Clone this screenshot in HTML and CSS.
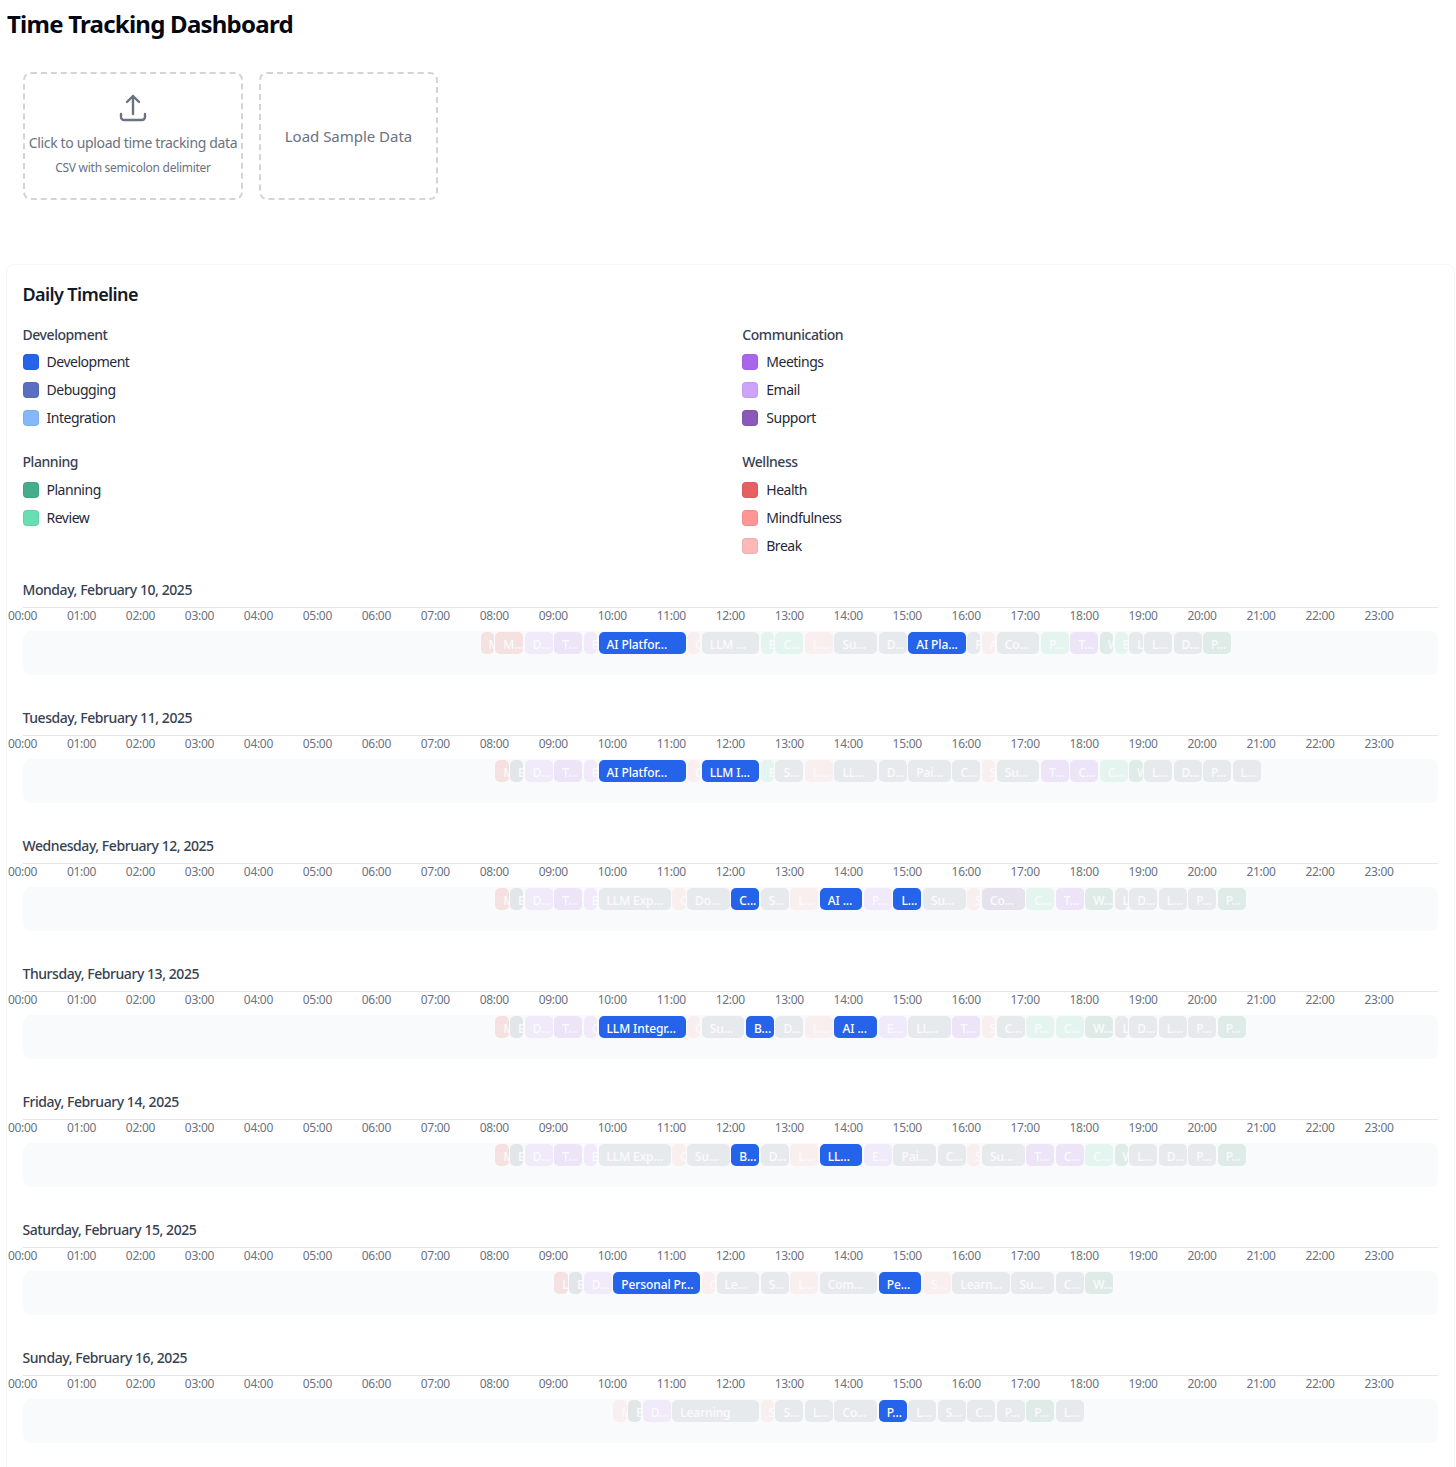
FILE: index.html
```html
<!DOCTYPE html>
<html lang="en">
<head>
<meta charset="utf-8">
<title>Time Tracking Dashboard</title>
<link rel="stylesheet" href="styles.css">
</head>
<body>
<main class="page">
<h1 class="title">Time Tracking Dashboard</h1>
<section class="actions">
<button class="drop drop-upload" type="button">
<svg class="drop-icon" viewBox="0 0 24 24" fill="none" stroke="currentColor" stroke-width="1.8" stroke-linecap="round" stroke-linejoin="round"><path d="M3 16.5v2.25A2.25 2.25 0 0 0 5.25 21h13.5A2.25 2.25 0 0 0 21 18.75V16.5m-13.5-9L12 3m0 0 4.5 4.5M12 3v13.5"/></svg>
<span class="drop-text">Click to upload time tracking data</span>
<span class="drop-hint">CSV with semicolon delimiter</span>
</button>
<button class="drop drop-sample" type="button">Load Sample Data</button>
</section>
<section class="card">
<h2 class="card-title">Daily Timeline</h2>
<div class="legend">
<div class="legend-group"><h3 class="legend-head">Development</h3>
<div class="legend-item"><i class="swatch sw-dev"></i>Development</div>
<div class="legend-item"><i class="swatch sw-debug"></i>Debugging</div>
<div class="legend-item"><i class="swatch sw-integ"></i>Integration</div></div>
<div class="legend-group"><h3 class="legend-head">Communication</h3>
<div class="legend-item"><i class="swatch sw-meet"></i>Meetings</div>
<div class="legend-item"><i class="swatch sw-email"></i>Email</div>
<div class="legend-item"><i class="swatch sw-support"></i>Support</div></div>
<div class="legend-group"><h3 class="legend-head">Planning</h3>
<div class="legend-item"><i class="swatch sw-plan"></i>Planning</div>
<div class="legend-item"><i class="swatch sw-review"></i>Review</div></div>
<div class="legend-group"><h3 class="legend-head">Wellness</h3>
<div class="legend-item"><i class="swatch sw-health"></i>Health</div>
<div class="legend-item"><i class="swatch sw-mind"></i>Mindfulness</div>
<div class="legend-item"><i class="swatch sw-break"></i>Break</div></div>
</div>

<article class="day">
<h3 class="day-head">Monday, February 10, 2025</h3>
<div class="hours"><span>00:00</span><span>01:00</span><span>02:00</span><span>03:00</span><span>04:00</span><span>05:00</span><span>06:00</span><span>07:00</span><span>08:00</span><span>09:00</span><span>10:00</span><span>11:00</span><span>12:00</span><span>13:00</span><span>14:00</span><span>15:00</span><span>16:00</span><span>17:00</span><span>18:00</span><span>19:00</span><span>20:00</span><span>21:00</span><span>22:00</span><span>23:00</span></div>
<div class="track">
<div class="ev red" style="grid-column:32/span 1">M</div>
<div class="ev rose" style="grid-column:33/span 2">M...</div>
<div class="ev lilac" style="grid-column:35/span 2">D...</div>
<div class="ev purple" style="grid-column:37/span 2">T...</div>
<div class="ev lilac" style="grid-column:39/span 1">E</div>
<div class="ev blue" style="grid-column:40/span 6">AI Platfor...</div>
<div class="ev pale" style="grid-column:46/span 1">C</div>
<div class="ev gray" style="grid-column:47/span 4">LLM ...</div>
<div class="ev mint" style="grid-column:51/span 1">B</div>
<div class="ev mint" style="grid-column:52/span 2">C...</div>
<div class="ev pale" style="grid-column:54/span 2">L...</div>
<div class="ev gray" style="grid-column:56/span 3">Su...</div>
<div class="ev gray" style="grid-column:59/span 2">D...</div>
<div class="ev blue" style="grid-column:61/span 4">AI Pla...</div>
<div class="ev gray" style="grid-column:65/span 1">P</div>
<div class="ev pale" style="grid-column:66/span 1">A</div>
<div class="ev gray" style="grid-column:67/span 3">Co...</div>
<div class="ev mint" style="grid-column:70/span 2">P...</div>
<div class="ev purple" style="grid-column:72/span 2">T...</div>
<div class="ev teal" style="grid-column:74/span 1">W</div>
<div class="ev mint" style="grid-column:75/span 1">B</div>
<div class="ev gray" style="grid-column:76/span 1">L</div>
<div class="ev gray" style="grid-column:77/span 2">L...</div>
<div class="ev gray" style="grid-column:79/span 2">D...</div>
<div class="ev teal" style="grid-column:81/span 2">P...</div>
</div>
</article>

<article class="day">
<h3 class="day-head">Tuesday, February 11, 2025</h3>
<div class="hours"><span>00:00</span><span>01:00</span><span>02:00</span><span>03:00</span><span>04:00</span><span>05:00</span><span>06:00</span><span>07:00</span><span>08:00</span><span>09:00</span><span>10:00</span><span>11:00</span><span>12:00</span><span>13:00</span><span>14:00</span><span>15:00</span><span>16:00</span><span>17:00</span><span>18:00</span><span>19:00</span><span>20:00</span><span>21:00</span><span>22:00</span><span>23:00</span></div>
<div class="track">
<div class="ev red" style="grid-column:33/span 1">M</div>
<div class="ev slate" style="grid-column:34/span 1">B</div>
<div class="ev lilac" style="grid-column:35/span 2">D...</div>
<div class="ev purple" style="grid-column:37/span 2">T...</div>
<div class="ev lilac" style="grid-column:39/span 1">E</div>
<div class="ev blue" style="grid-column:40/span 6">AI Platfor...</div>
<div class="ev pale" style="grid-column:46/span 1">C</div>
<div class="ev blue" style="grid-column:47/span 4">LLM I...</div>
<div class="ev mint" style="grid-column:51/span 1">B</div>
<div class="ev gray" style="grid-column:52/span 2">S...</div>
<div class="ev pale" style="grid-column:54/span 2">L...</div>
<div class="ev gray" style="grid-column:56/span 3">LL...</div>
<div class="ev gray" style="grid-column:59/span 2">D...</div>
<div class="ev gray" style="grid-column:61/span 3">Pai...</div>
<div class="ev gray" style="grid-column:64/span 2">C...</div>
<div class="ev pale" style="grid-column:66/span 1">S</div>
<div class="ev gray" style="grid-column:67/span 3">Su...</div>
<div class="ev purple" style="grid-column:70/span 2">T...</div>
<div class="ev purple" style="grid-column:72/span 2">C...</div>
<div class="ev mint" style="grid-column:74/span 2">C...</div>
<div class="ev teal" style="grid-column:76/span 1">W</div>
<div class="ev gray" style="grid-column:77/span 2">L...</div>
<div class="ev gray" style="grid-column:79/span 2">D...</div>
<div class="ev gray" style="grid-column:81/span 2">P...</div>
<div class="ev gray" style="grid-column:83/span 2">L...</div>
</div>
</article>

<article class="day">
<h3 class="day-head">Wednesday, February 12, 2025</h3>
<div class="hours"><span>00:00</span><span>01:00</span><span>02:00</span><span>03:00</span><span>04:00</span><span>05:00</span><span>06:00</span><span>07:00</span><span>08:00</span><span>09:00</span><span>10:00</span><span>11:00</span><span>12:00</span><span>13:00</span><span>14:00</span><span>15:00</span><span>16:00</span><span>17:00</span><span>18:00</span><span>19:00</span><span>20:00</span><span>21:00</span><span>22:00</span><span>23:00</span></div>
<div class="track">
<div class="ev red" style="grid-column:33/span 1">M</div>
<div class="ev slate" style="grid-column:34/span 1">B</div>
<div class="ev lilac" style="grid-column:35/span 2">D...</div>
<div class="ev purple" style="grid-column:37/span 2">T...</div>
<div class="ev lilac" style="grid-column:39/span 1">E</div>
<div class="ev gray" style="grid-column:40/span 5">LLM Exp...</div>
<div class="ev pale" style="grid-column:45/span 1">C</div>
<div class="ev gray" style="grid-column:46/span 3">Do...</div>
<div class="ev blue" style="grid-column:49/span 2">C...</div>
<div class="ev gray" style="grid-column:51/span 2">S...</div>
<div class="ev pale" style="grid-column:53/span 2">L...</div>
<div class="ev blue" style="grid-column:55/span 3">AI ...</div>
<div class="ev lilac" style="grid-column:58/span 2">P...</div>
<div class="ev blue" style="grid-column:60/span 2">L...</div>
<div class="ev gray" style="grid-column:62/span 3">Su...</div>
<div class="ev pale" style="grid-column:65/span 1">S</div>
<div class="ev plum" style="grid-column:66/span 3">Co...</div>
<div class="ev mint" style="grid-column:69/span 2">C...</div>
<div class="ev purple" style="grid-column:71/span 2">T...</div>
<div class="ev teal" style="grid-column:73/span 2">W...</div>
<div class="ev gray" style="grid-column:75/span 1">L</div>
<div class="ev gray" style="grid-column:76/span 2">D...</div>
<div class="ev gray" style="grid-column:78/span 2">L...</div>
<div class="ev gray" style="grid-column:80/span 2">P...</div>
<div class="ev teal" style="grid-column:82/span 2">P...</div>
</div>
</article>

<article class="day">
<h3 class="day-head">Thursday, February 13, 2025</h3>
<div class="hours"><span>00:00</span><span>01:00</span><span>02:00</span><span>03:00</span><span>04:00</span><span>05:00</span><span>06:00</span><span>07:00</span><span>08:00</span><span>09:00</span><span>10:00</span><span>11:00</span><span>12:00</span><span>13:00</span><span>14:00</span><span>15:00</span><span>16:00</span><span>17:00</span><span>18:00</span><span>19:00</span><span>20:00</span><span>21:00</span><span>22:00</span><span>23:00</span></div>
<div class="track">
<div class="ev red" style="grid-column:33/span 1">M</div>
<div class="ev slate" style="grid-column:34/span 1">B</div>
<div class="ev lilac" style="grid-column:35/span 2">D...</div>
<div class="ev purple" style="grid-column:37/span 2">T...</div>
<div class="ev lilac" style="grid-column:39/span 1">C</div>
<div class="ev blue" style="grid-column:40/span 6">LLM Integr...</div>
<div class="ev pale" style="grid-column:46/span 1">C</div>
<div class="ev gray" style="grid-column:47/span 3">Su...</div>
<div class="ev blue" style="grid-column:50/span 2">B...</div>
<div class="ev gray" style="grid-column:52/span 2">D...</div>
<div class="ev pale" style="grid-column:54/span 2">L...</div>
<div class="ev blue" style="grid-column:56/span 3">AI ...</div>
<div class="ev lilac" style="grid-column:59/span 2">E...</div>
<div class="ev gray" style="grid-column:61/span 3">LL...</div>
<div class="ev purple" style="grid-column:64/span 2">T...</div>
<div class="ev pale" style="grid-column:66/span 1">S</div>
<div class="ev gray" style="grid-column:67/span 2">C...</div>
<div class="ev mint" style="grid-column:69/span 2">P...</div>
<div class="ev mint" style="grid-column:71/span 2">C...</div>
<div class="ev teal" style="grid-column:73/span 2">W...</div>
<div class="ev gray" style="grid-column:75/span 1">L</div>
<div class="ev gray" style="grid-column:76/span 2">D...</div>
<div class="ev gray" style="grid-column:78/span 2">L...</div>
<div class="ev gray" style="grid-column:80/span 2">P...</div>
<div class="ev teal" style="grid-column:82/span 2">P...</div>
</div>
</article>

<article class="day">
<h3 class="day-head">Friday, February 14, 2025</h3>
<div class="hours"><span>00:00</span><span>01:00</span><span>02:00</span><span>03:00</span><span>04:00</span><span>05:00</span><span>06:00</span><span>07:00</span><span>08:00</span><span>09:00</span><span>10:00</span><span>11:00</span><span>12:00</span><span>13:00</span><span>14:00</span><span>15:00</span><span>16:00</span><span>17:00</span><span>18:00</span><span>19:00</span><span>20:00</span><span>21:00</span><span>22:00</span><span>23:00</span></div>
<div class="track">
<div class="ev red" style="grid-column:33/span 1">M</div>
<div class="ev slate" style="grid-column:34/span 1">B</div>
<div class="ev lilac" style="grid-column:35/span 2">D...</div>
<div class="ev purple" style="grid-column:37/span 2">T...</div>
<div class="ev lilac" style="grid-column:39/span 1">E</div>
<div class="ev gray" style="grid-column:40/span 5">LLM Exp...</div>
<div class="ev pale" style="grid-column:45/span 1">C</div>
<div class="ev gray" style="grid-column:46/span 3">Su...</div>
<div class="ev blue" style="grid-column:49/span 2">B...</div>
<div class="ev gray" style="grid-column:51/span 2">D...</div>
<div class="ev pale" style="grid-column:53/span 2">L...</div>
<div class="ev blue" style="grid-column:55/span 3">LL...</div>
<div class="ev lilac" style="grid-column:58/span 2">E...</div>
<div class="ev gray" style="grid-column:60/span 3">Pai...</div>
<div class="ev gray" style="grid-column:63/span 2">C...</div>
<div class="ev pale" style="grid-column:65/span 1">S</div>
<div class="ev gray" style="grid-column:66/span 3">Su...</div>
<div class="ev purple" style="grid-column:69/span 2">T...</div>
<div class="ev purple" style="grid-column:71/span 2">C...</div>
<div class="ev mint" style="grid-column:73/span 2">C...</div>
<div class="ev teal" style="grid-column:75/span 1">W</div>
<div class="ev gray" style="grid-column:76/span 2">L...</div>
<div class="ev gray" style="grid-column:78/span 2">D...</div>
<div class="ev gray" style="grid-column:80/span 2">P...</div>
<div class="ev teal" style="grid-column:82/span 2">P...</div>
</div>
</article>

<article class="day">
<h3 class="day-head">Saturday, February 15, 2025</h3>
<div class="hours"><span>00:00</span><span>01:00</span><span>02:00</span><span>03:00</span><span>04:00</span><span>05:00</span><span>06:00</span><span>07:00</span><span>08:00</span><span>09:00</span><span>10:00</span><span>11:00</span><span>12:00</span><span>13:00</span><span>14:00</span><span>15:00</span><span>16:00</span><span>17:00</span><span>18:00</span><span>19:00</span><span>20:00</span><span>21:00</span><span>22:00</span><span>23:00</span></div>
<div class="track">
<div class="ev red" style="grid-column:37/span 1">L</div>
<div class="ev slate" style="grid-column:38/span 1">B</div>
<div class="ev lilac" style="grid-column:39/span 2">D...</div>
<div class="ev blue" style="grid-column:41/span 6">Personal Pr...</div>
<div class="ev pale" style="grid-column:47/span 1">C</div>
<div class="ev gray" style="grid-column:48/span 3">Le...</div>
<div class="ev gray" style="grid-column:51/span 2">S...</div>
<div class="ev pale" style="grid-column:53/span 2">L...</div>
<div class="ev gray" style="grid-column:55/span 4">Com...</div>
<div class="ev blue" style="grid-column:59/span 3">Pe...</div>
<div class="ev pale" style="grid-column:62/span 2">S...</div>
<div class="ev gray" style="grid-column:64/span 4">Learn...</div>
<div class="ev gray" style="grid-column:68/span 3">Su...</div>
<div class="ev gray" style="grid-column:71/span 2">C...</div>
<div class="ev teal" style="grid-column:73/span 2">W...</div>
</div>
</article>

<article class="day">
<h3 class="day-head">Sunday, February 16, 2025</h3>
<div class="hours"><span>00:00</span><span>01:00</span><span>02:00</span><span>03:00</span><span>04:00</span><span>05:00</span><span>06:00</span><span>07:00</span><span>08:00</span><span>09:00</span><span>10:00</span><span>11:00</span><span>12:00</span><span>13:00</span><span>14:00</span><span>15:00</span><span>16:00</span><span>17:00</span><span>18:00</span><span>19:00</span><span>20:00</span><span>21:00</span><span>22:00</span><span>23:00</span></div>
<div class="track">
<div class="ev pale" style="grid-column:41/span 1">M</div>
<div class="ev slate" style="grid-column:42/span 1">B</div>
<div class="ev lilac" style="grid-column:43/span 2">D...</div>
<div class="ev gray" style="grid-column:45/span 6">Learning</div>
<div class="ev pale" style="grid-column:51/span 1">S</div>
<div class="ev gray" style="grid-column:52/span 2">S...</div>
<div class="ev gray" style="grid-column:54/span 2">L...</div>
<div class="ev gray" style="grid-column:56/span 3">Co...</div>
<div class="ev blue" style="grid-column:59/span 2">P...</div>
<div class="ev gray" style="grid-column:61/span 2">L...</div>
<div class="ev gray" style="grid-column:63/span 2">S...</div>
<div class="ev gray" style="grid-column:65/span 2">C...</div>
<div class="ev gray" style="grid-column:67/span 2">P...</div>
<div class="ev teal" style="grid-column:69/span 2">P...</div>
<div class="ev gray" style="grid-column:71/span 2">L...</div>
</div>
</article>
</section>
</main>
</body>
</html>
```
FILE: styles.css
```css
* { box-sizing: border-box; }
html, body { margin: 0; padding: 0; background: #fff; }
body {
  font-family: "Noto Sans", "Open Sans", "Liberation Sans", sans-serif;
  color: #111827;
  overflow-x: hidden;
}
.page { padding: 0 1px 0 5.5px; }
.title {
  margin: 0;
  padding: 8px 0 0 1.5px;
  height: 72px;
  font-size: 24px;
  line-height: 32px;
  font-weight: 700;
  letter-spacing: -0.76px;
  color: #030712;
}
.actions {
  display: flex;
  gap: 16px;
  padding-left: 17.5px;
  height: 192px;
}
.drop {
  height: 128px;
  border: 2px dashed #d1d5db;
  border-radius: 8px;
  background: #fff;
  color: #6b7280;
  font-family: inherit;
  padding: 0;
  display: flex;
  flex-direction: column;
  align-items: center;
  justify-content: flex-start;
}
.drop-upload { width: 220px; padding-top: 18px; }
.drop-sample { width: 179px; justify-content: center; font-size: 15px; letter-spacing: -0.02px; }
.drop-icon { width: 32px; height: 32px; color: #6b7280; display: block; }
.drop-text { font-size: 14px; line-height: 20px; margin-top: 9px; letter-spacing: -0.35px; white-space: nowrap; }
.drop-hint { font-size: 12px; line-height: 16px; margin-top: 7px; letter-spacing: -0.28px; white-space: nowrap; }
.card {
  border: 1px solid #f5f6f7;
  border-radius: 8px;
  box-shadow: 0 1px 2px rgba(0, 0, 0, 0.02);
  padding: 15px 16px 0;
  background: #fff;
}
.card-title {
  margin: 0 0 16.8px;
  font-size: 18px;
  line-height: 28px;
  font-weight: 600;
  letter-spacing: -0.6px;
  color: #111827;
}
.legend {
  display: grid;
  grid-template-columns: 1fr 1fr;
  column-gap: 24px;
  row-gap: 24px;
  margin-bottom: 24px;
}
.legend-group { display: flex; flex-direction: column; gap: 8px; }
.legend-head { margin: 0; height: 19.6px; font-size: 14px; line-height: 20px; font-weight: 500; letter-spacing: -0.44px; color: #374151; }
.legend-item {
  display: flex;
  align-items: center;
  gap: 8px;
  font-size: 14px;
  line-height: 20px;
  letter-spacing: -0.48px;
  color: #1f2937;
}
.swatch { width: 16px; height: 16px; border-radius: 4px; border: 1px solid rgba(0, 0, 0, 0.06); flex: none; }
.sw-dev { background: #2563eb; }
.sw-debug { background: #5a6fc0; }
.sw-integ { background: #85b7fb; }
.sw-meet { background: #a965ec; }
.sw-email { background: #cda4fb; }
.sw-support { background: #8b5ab8; }
.sw-plan { background: #44ad8c; }
.sw-review { background: #68dfb2; }
.sw-health { background: #e85f62; }
.sw-mind { background: #ff9595; }
.sw-break { background: #ffb8b8; }
.day { margin-bottom: 33px; }
.day-head { margin: 0 0 7px; height: 20px; font-size: 14px; line-height: 20px; font-weight: 500; letter-spacing: -0.44px; color: #374151; }
.hours {
  display: grid;
  grid-template-columns: repeat(24, 1fr);
  height: 24px;
  border-top: 1px solid #e5e7eb;
  font-size: 12px;
  line-height: 16px;
  color: #6b7280;
  letter-spacing: -0.3px;
}
.hours span { justify-self: start; transform: translateX(-50%); }
.track {
  display: grid;
  grid-template-columns: repeat(96, 1fr);
  align-items: start;
  height: 44px;
  padding-top: 1px;
  background: #f9fafb;
  border-radius: 8px;
}
.ev {
  grid-row: 1;
  height: 22px;
  margin: 0 .5px 0 1px;
  padding: 3px 0 0 8px;
  min-width: 0;
  overflow: hidden;
  white-space: nowrap;
  border-radius: 5px;
  color: #fff;
  font-size: 12px;
  line-height: 19px;
  font-weight: 500;
  letter-spacing: -0.1px;
  opacity: 0.15;
}
.blue { background: #2563eb; opacity: 1; }
.gray { background: #8895a4; }
.slate { background: #667b83; }
.red { background: #e55a50; }
.rose { background: #d9584a; }
.pale { background: #ffb8b0; }
.lilac { background: #c496fb; }
.purple { background: #ad6be8; }
.plum { background: #8161a4; }
.mint { background: #73dfb2; }
.teal { background: #4c9d7d; }
```
